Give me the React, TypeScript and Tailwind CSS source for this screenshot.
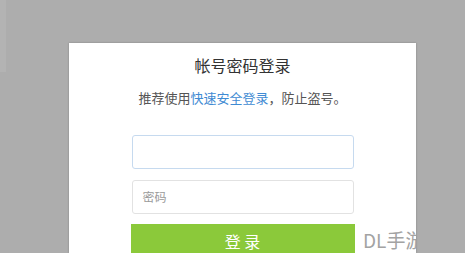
import React from "react";

export default function App() {
  const font = { fontFamily: '"Noto Sans CJK SC", "Noto Sans", sans-serif' };
  return (
    <div className="relative h-[253px] w-[465px] overflow-hidden bg-[#adadad]" style={font}>
      <div className="absolute left-0 top-0 h-[72px] w-[6px] bg-[#b3b3b3]" />
      <div className="pl-[69px] pt-[43px]">
        <div className="relative flex h-[210px] w-[347px] flex-col items-center overflow-hidden bg-white shadow-[0_0_2px_rgba(0,0,0,0.25)]">
          <div className="mt-[11px] shrink-0 text-[16px] leading-[22px] text-[#333]">帐号密码登录</div>
          <div className="mt-[13px] shrink-0 text-[13px] leading-[18px] text-[#555]">
            推荐使用<span className="text-[#3f8bd3]">快速安全登录</span>，防止盗号。
          </div>
          <div className="mt-[28px] h-[34px] w-[222px] shrink-0 rounded-[3px] border border-[#c6daef] bg-white" />
          <div className="mt-[11px] flex h-[34px] w-[222px] shrink-0 items-center rounded-[3px] border border-[#e2e2e2] bg-white pl-[10px] text-[12px] text-[#9a9a9a]">
            密码
          </div>
          <div className="mt-[10px] flex h-[34px] w-[224px] shrink-0 items-center justify-center bg-[#8bc93a] text-[16px] leading-[20px] text-white">
            登 录
          </div>
          <div className="absolute left-[294px] top-[185px] whitespace-nowrap text-[19px] leading-[24px] text-[#a3a3a3]">
            DL手游
          </div>
        </div>
      </div>
    </div>
  );
}
